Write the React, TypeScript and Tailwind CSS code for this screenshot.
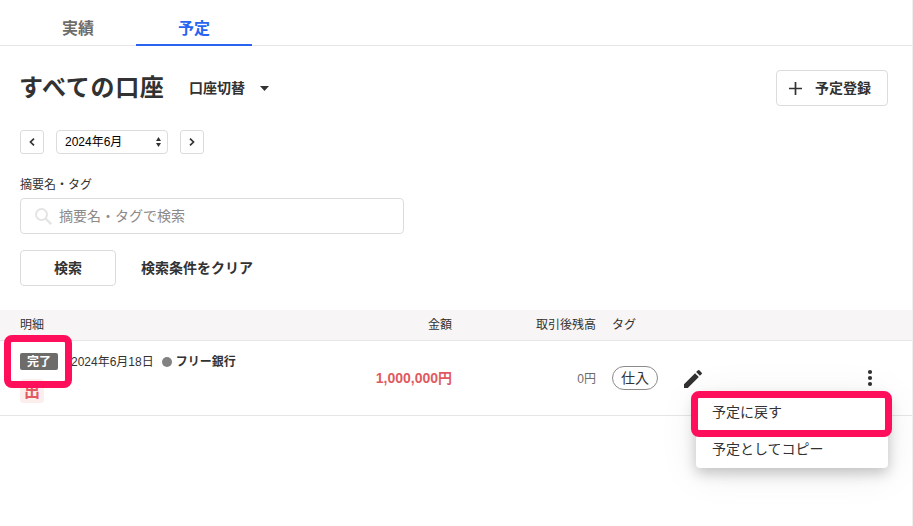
import { useState } from "react";
import type { ReactNode } from "react";

const tabs = ["実績", "予定"];
const menuItems = ["予定に戻す", "予定としてコピー"];

function IconButton({ children, label }: { children: ReactNode; label: string }) {
  return (
    <button
      aria-label={label}
      className="flex h-6 w-6 items-center justify-center rounded-[3px] border border-[#dcdcdc] bg-white"
    >
      {children}
    </button>
  );
}

function Tabs() {
  const [active, setActive] = useState("予定");

  return (
    <nav className="flex h-[46px] border-b border-[#e6e6e6] pl-5">
      {tabs.map((tab) => (
        <button
          key={tab}
          onClick={() => setActive(tab)}
          className={
            tab === active
              ? "h-[46px] w-[116px] border-b-2 border-[#2864f0] pt-[13px] text-[16px] font-bold text-[#2864f0]"
              : "h-[46px] w-[116px] border-b-2 border-transparent pt-[13px] text-[16px] font-bold text-[#6e6b6b]"
          }
        >
          {tab}
        </button>
      ))}
    </nav>
  );
}

function MonthPicker() {
  return (
    <div className="mt-6 flex gap-3">
      <IconButton label="前の月">
        <svg width="6" height="8" viewBox="0 0 6 8" fill="none" stroke="#323232" strokeWidth="1.7">
          <path d="M5 0.6 1.5 4 5 7.4" />
        </svg>
      </IconButton>
      <button className="flex h-6 w-28 items-center justify-between rounded-[4px] border border-[#dcdcdc] pr-[6px] pl-2 text-[12px] text-black">
        2024年6月
        <svg width="5" height="10" viewBox="0 0 5 10" fill="#323232">
          <path d="M2.5 0 5 4H0zM2.5 10 0 6h5z" />
        </svg>
      </button>
      <IconButton label="次の月">
        <svg width="6" height="8" viewBox="0 0 6 8" fill="none" stroke="#323232" strokeWidth="1.7">
          <path d="M1 0.6 4.5 4 1 7.4" />
        </svg>
      </IconButton>
    </div>
  );
}

function RowMenu() {
  return (
    <div className="absolute top-[53px] left-[696px] z-10 w-48 rounded-[4px] bg-white pb-px shadow-[0_5px_14px_rgba(0,0,0,0.22),0_4px_40px_rgba(0,0,0,0.08)]">
      {menuItems.map((item) => (
        <button
          key={item}
          className="block h-9 w-full pl-4 text-left text-[14px] leading-9 last-of-type:mt-px"
        >
          {item}
        </button>
      ))}
      <div className="pointer-events-none absolute -top-[3px] -left-[5px] h-[46px] w-[201px] rounded-[8px] border-[7px] border-[#ff0f5b]" />
    </div>
  );
}

export default function App() {
  return (
    <div className="h-[526px] w-[913px] overflow-hidden bg-white font-['Liberation_Sans','Noto_Sans_CJK_JP',sans-serif] text-[#323232]">
      <div className="h-full w-[913px] border-r border-[#f0f0f0]">
        <Tabs />

        <main>
          <section className="px-5 pt-6">
            <div className="flex h-9 w-[868px] items-center">
              <h1 className="-ml-px w-[145px] text-[24px] leading-[34px] font-bold tracking-[0.7px] whitespace-nowrap">
                すべての口座
              </h1>
              <button className="ml-[25px] flex items-center text-[14px] font-bold">
                口座切替
                <svg className="ml-[15px]" width="9" height="5" viewBox="0 0 9 5" fill="#323232">
                  <path d="M0 0h9L4.5 5z" />
                </svg>
              </button>
              <button className="ml-auto flex h-9 w-28 items-center rounded-[4px] border border-[#dcdcdc] pl-3 text-[14px] font-bold">
                <svg width="13" height="13" viewBox="0 0 13 13" stroke="#323232" strokeWidth="1.7">
                  <path d="M6.5 0v13M0 6.5h13" />
                </svg>
                <span className="ml-[13px]">予定登録</span>
              </button>
            </div>

            <MonthPicker />

            <div className="mt-[23px] text-[12px] leading-4">摘要名・タグ</div>
            <div className="mt-[5px] flex h-9 w-96 items-center rounded-[4px] border border-[#dcdcdc] pl-[14px] text-[14px] text-[#8c8989]">
              <svg width="17" height="17" viewBox="0 0 17 17" fill="none" stroke="#e4e4e4" strokeWidth="2">
                <circle cx="6.5" cy="6.5" r="5.5" />
                <path d="M10.5 10.5 16.2 16.2" strokeWidth="2.4" />
              </svg>
              <span className="ml-[7px]">摘要名・タグで検索</span>
            </div>

            <div className="mt-4 flex items-center text-[14px] font-bold">
              <button className="h-9 w-24 rounded-[4px] border border-[#dcdcdc]">検索</button>
              <button className="ml-[25px]">検索条件をクリア</button>
            </div>
          </section>

          <section className="mt-6">
            <div className="flex h-[31px] border-b border-[#e6e6e6] bg-[#f7f5f5] pl-5 text-[12px] leading-[31px]">
              <div className="w-[332px]">明細</div>
              <div className="w-[100px] text-right">金額</div>
              <div className="w-36 text-right">取引後残高</div>
              <div className="ml-4">タグ</div>
            </div>

            <div className="relative flex h-[75px] items-center border-b border-[#e6e6e6] pl-5">
              <div className="h-full w-[332px] pt-3">
                <div className="flex h-[17px] items-center text-[12px]">
                  <span className="relative block h-[17px] w-[38px] rounded-[2px] bg-[#6e6b6b] text-center leading-[18px] font-bold text-white">
                    完了
                    <span className="pointer-events-none absolute -top-[18px] -left-4 z-10 h-[53px] w-[68px] rounded-[8px] border-[7px] border-[#ff0f5b]" />
                  </span>
                  <span className="ml-[13px]">2024年6月18日</span>
                  <span className="ml-2 h-[10px] w-[10px] rounded-full bg-[#828282]" />
                  <span className="ml-1 font-bold">フリー銀行</span>
                </div>
                <div className="mt-[9px] h-6 w-6 rounded-[4px] bg-[#fdeeee] text-center text-[16px] leading-[26px] font-bold text-[#e05a5f]">
                  出
                </div>
              </div>
              <div className="w-[100px] text-right text-[14px] font-bold text-[#e05a5f]">1,000,000円</div>
              <div className="w-36 pt-px text-right text-[12px] text-[#6e6b6b]">0円</div>
              <span className="ml-4 h-6 w-[46px] rounded-full border border-[#8c8989] text-center text-[14px] leading-[22px]">
                仕入
              </span>
              <button aria-label="編集" className="mt-[2px] ml-[23px]">
                <svg width="24" height="24" viewBox="0 0 24 24" fill="#323232">
                  <path d="M3 17.25V21h3.75L17.81 9.94l-3.75-3.75L3 17.25zM20.71 7.04a.996.996 0 0 0 0-1.41l-2.34-2.34a.996.996 0 0 0-1.41 0l-1.83 1.83 3.75 3.75 1.83-1.83z" />
                </svg>
              </button>
              <button aria-label="メニュー" className="ml-[153px]">
                <svg width="24" height="24" viewBox="0 0 24 24" fill="#323232">
                  <circle cx="12" cy="6" r="2.1" />
                  <circle cx="12" cy="12" r="2.1" />
                  <circle cx="12" cy="18" r="2.1" />
                </svg>
              </button>
              <RowMenu />
            </div>
          </section>
        </main>
      </div>
    </div>
  );
}
